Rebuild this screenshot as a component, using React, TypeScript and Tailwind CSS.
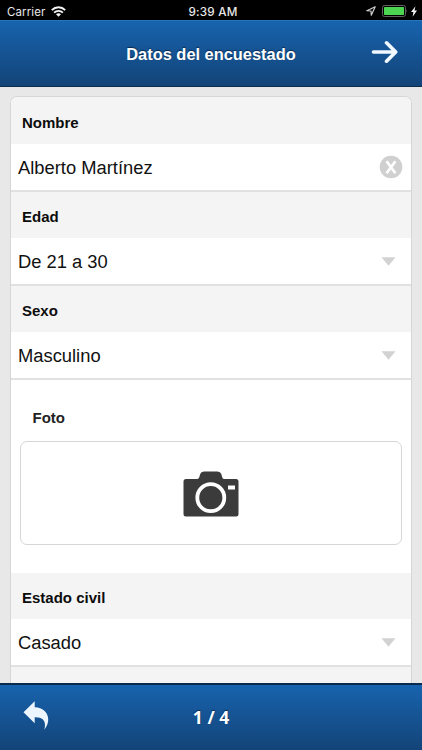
import type { ReactNode } from "react";

function StatusBar() {
  return (
    <div className="grid h-5 shrink-0 grid-cols-[1fr_auto_1fr] items-center bg-black font-['Inter','Liberation_Sans',sans-serif] text-[11.5px] leading-5 text-[#e8e8e8]">
      <div className="flex items-center gap-[5px] pl-[7px]">
        <span className="w-[39px] pt-[2px] whitespace-nowrap tracking-[0.1px]">Carrier</span>
        <svg width="15" height="11" viewBox="0 0 15 11" fill="none" stroke="#f5f5f5" strokeWidth="1.9">
          <path d="M.8 4.1A9.4 9.4 0 0 1 14.2 4.1" />
          <path d="M3.1 6.7A6.2 6.2 0 0 1 11.9 6.7" />
          <path d="M7.5 10.8 5 8.3Q7.5 6.4 10 8.3Z" fill="#f5f5f5" stroke="none" />
        </svg>
      </div>
      <span className="pt-[2px] pl-[4px] text-[11.7px] font-medium tracking-[0.2px]">9:39 AM</span>
      <div className="flex items-center justify-end pr-[5px]">
        <svg width="10" height="10" viewBox="0 0 10 10" fill="none" stroke="#ccc" strokeWidth="1.2" strokeLinejoin="round" className="mr-[6px]">
          <path d="M9.2.8.8 4.7 5 5l.3 4.2Z" />
        </svg>
        <svg width="26" height="12" viewBox="0 0 26 12" className="mr-[3px]">
          <rect x=".5" y=".5" width="23" height="11" rx="2" fill="none" stroke="#626262" />
          <rect x="2" y="2" width="20" height="8" rx=".7" fill="#4cd551" />
          <path d="M24.5 4.2q1.5 1.8 0 3.6Z" fill="#626262" />
        </svg>
        <svg width="6" height="11" viewBox="0 0 6 11" fill="#f5f5f5">
          <path d="M4.4.2 0 6.1h2.4L1.6 10.8 6 4.6H3.5Z" />
        </svg>
      </div>
    </div>
  );
}

function Field({ label, value, first = false, children }: { label: string; value: string; first?: boolean; children: ReactNode }) {
  return (
    <div className="shrink-0">
      <div className={`flex items-center bg-[#f4f4f4] pl-[11px] text-[15px] font-bold text-[#0c0c0c] ${first ? "h-[47px] pt-[5px]" : "h-[46px] pt-[4px]"}`}>{label}</div>
      <div className="flex h-12 items-center justify-between border-b-2 border-[#e1e1e1] bg-white pr-[15px] pl-[7px]">
        <span className="pt-[2px] text-[18.35px] leading-6 text-[#111]">{value}</span>
        {children}
      </div>
    </div>
  );
}

function Caret() {
  return (
    <svg width="15" height="9" viewBox="0 0 15 9" className="mt-px">
      <path d="M.5.2h14L7.5 8.8Z" fill="#d2d2d2" />
    </svg>
  );
}

export default function App() {
  return (
    <div className="flex h-[750px] w-[422px] flex-col overflow-hidden bg-[#e8e8e8] font-['Liberation_Sans',Arial,sans-serif]">
      <StatusBar />
      <header className="grid h-[67px] shrink-0 grid-cols-[1fr_auto_1fr] items-center border-t border-b border-t-[#2874b8] border-b-[#102c4b] bg-linear-to-b from-[#1763ae] to-[#134478] text-white">
        <span />
        <h1 className="pt-[2px] text-[16.4px] font-bold [text-shadow:0_-1px_1px_#0a2b50]">Datos del encuestado</h1>
        <button aria-label="Siguiente" className="mr-6 justify-self-end">
          <svg width="27" height="24" viewBox="0 0 27 24" fill="none" stroke="#f1f8ff" strokeWidth="3.6" strokeLinecap="round" strokeLinejoin="round" className="-mt-[3px]">
            <path d="M2.5 12H24M15.5 2.8 24.7 12 15.5 21.2" />
          </svg>
        </button>
      </header>

      <main className="min-h-0 flex-1 px-[10px] pt-[9px]">
        <div className="flex h-full flex-col overflow-hidden rounded-t-[7px] border border-b-0 border-[#d6d6d6] bg-white">
          <Field label="Nombre" value="Alberto Martínez" first>
            <svg width="24" height="24" viewBox="0 0 24 24" className="-mr-[7px]">
              <circle cx="12" cy="12" r="11.3" fill="#d0d0d0" />
              <path d="m7.6 6.2 8.8 12m0-12-8.8 12" stroke="#fff" strokeWidth="2.7" />
            </svg>
          </Field>
          <Field label="Edad" value="De 21 a 30"><Caret /></Field>
          <Field label="Sexo" value="Masculino"><Caret /></Field>
          <section className="h-[193px] shrink-0 px-[9px] pt-[28px]">
            <h2 className="pl-[12.5px] text-[15px] leading-5 font-bold text-[#222]">Foto</h2>
            <button aria-label="Tomar foto" className="mt-[13px] flex h-[104px] w-full items-center justify-center rounded-[7px] border border-[#d6d6d6] bg-white">
              <svg width="56" height="46" viewBox="0 0 56 46" className="mt-[2px]">
                <path d="M3 8H14.5Q16 7.8 16.5 5.5L17.2 3Q18 .5 21 .5H34.5Q37.5.5 38.3 3L39 5.5Q39.5 8 41 8H53Q55.5 8 55.5 10.5V43Q55.5 45.5 53 45.5H3Q.5 45.5.5 43V10.5Q.5 8 3 8Z" fill="#3b3b3b" />
                <circle cx="27.8" cy="26.7" r="13.5" fill="none" stroke="#fff" strokeWidth="3.8" />
                <rect x="45" y="14.5" width="7" height="4" fill="#fff" />
              </svg>
            </button>
          </section>
          <Field label="Estado civil" value="Casado"><Caret /></Field>
          <div className="h-[18px] shrink-0 bg-[#f4f4f4]" />
        </div>
      </main>

      <footer className="grid h-[67px] shrink-0 grid-cols-[1fr_auto_1fr] items-center border-t-2 border-[#0b2b4e] bg-linear-to-b from-[#1763ae] to-[#134478] text-white">
        <button aria-label="Volver" className="ml-[23px] justify-self-start">
          <svg width="27" height="29" viewBox="0 0 27 29" className="-mt-[4px]">
            <path d="M.5 11.2 11.7.2V6.3C22 6 30.5 16.8 21.3 28.8 23.5 20.5 20.5 15.8 11.7 16.2V22.2Z" fill="#edf6ff" />
          </svg>
        </button>
        <span className="font-['Open_Sans',sans-serif] text-[17.5px] font-bold [text-shadow:0_-1px_1px_#0a2b50]">1 / 4</span>
        <span />
      </footer>
    </div>
  );
}
